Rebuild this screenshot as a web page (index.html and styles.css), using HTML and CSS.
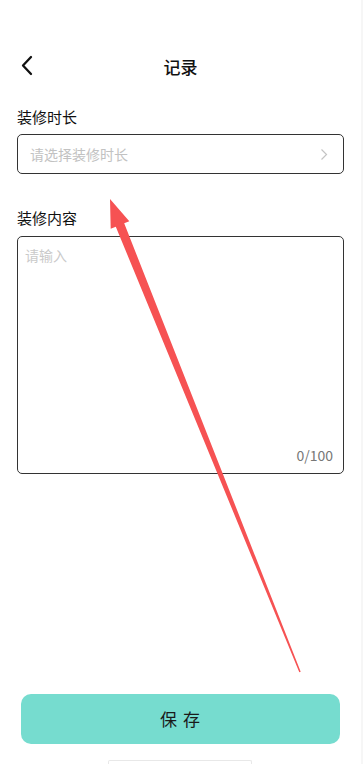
FILE: index.html
```html
<!DOCTYPE html>
<html>
	<head>
		<meta charset="UTF-8">
		<title>记录</title>
		<link rel="stylesheet" href="styles.css">
	</head>
	<body>
		<div class="page">
			<!--顶部导航-->
			<div class="nav">
				<div class="back">
					<svg width="14" height="22" viewBox="0 0 14 22">
						<path d="M10 2 L2 10.5 L10 19" fill="none" stroke="#111" stroke-width="2.3" stroke-linecap="round" stroke-linejoin="round"/>
					</svg>
				</div>
				<div class="title">记录</div>
			</div>
			<!--表单-->
			<div class="form">
				<div class="label">装修时长</div>
				<div class="select">
					<span class="placeholder">请选择装修时长</span>
					<svg width="8" height="13" viewBox="0 0 8 13">
						<path d="M1.5 1.5 L6.5 6.5 L1.5 11.5" fill="none" stroke="#c4c4c4" stroke-width="1.2"/>
					</svg>
				</div>
				<div class="label label2">装修内容</div>
				<div class="textarea">
					<div class="tip">请输入</div>
					<div class="count">0/100</div>
				</div>
			</div>
			<div class="btn">保 存</div>
			<div class="home"></div>
			<!--标注箭头-->
			<svg class="arrow" width="363" height="764" viewBox="0 0 363 764">
				<polygon points="110,199 129.3,221.3 124.2,223.3 300.7,671.7 299.3,672.3 115.8,226.7 110.7,228.7" fill="#f65253"/>
			</svg>
		</div>
	</body>
</html>
```

FILE: styles.css
```css
*{
	margin: 0;
	padding: 0;
	box-sizing: border-box;
}
body{
	background: #fff;
	font-family: "Noto Sans CJK SC", "Noto Sans", sans-serif;
	color: #111;
}
.page{
	position: relative;
	width: 363px;
	height: 764px;
	display: flex;
	flex-direction: column;
	border-right: 2px solid #f6f6f6;
	overflow: hidden;
}
.nav{
	margin-top: 44px;
	height: 44px;
	position: relative;
	display: flex;
	align-items: center;
	justify-content: center;
}
.back{
	position: absolute;
	left: 21px;
	top: 11px;
	width: 14px;
	height: 22px;
}
.back svg{
	display: block;
}
.title{
	font-size: 17px;
	font-weight: 500;
	line-height: 24px;
	padding-top: 2px;
}
.form{
	padding: 0 17px;
}
.label{
	margin-top: 19px;
	font-size: 15px;
	line-height: 20px;
	color: #111;
}
.label2{
	margin-top: 34px;
}
.select{
	margin-top: 7px;
	height: 40px;
	border: 1px solid #333;
	border-radius: 5px;
	display: flex;
	align-items: center;
	justify-content: space-between;
	padding: 0 15px 0 12px;
}
.placeholder{
	font-size: 14px;
	color: #c2c2c2;
}
.select svg{
	display: block;
}
.textarea{
	margin-top: 8px;
	height: 238px;
	border: 1px solid #333;
	border-radius: 5px;
	display: flex;
	flex-direction: column;
	justify-content: space-between;
	padding: 8px 10px 8px 7px;
}
.tip{
	font-size: 14px;
	line-height: 20px;
	color: #cacaca;
}
.count{
	text-align: right;
	font-size: 14px;
	line-height: 20px;
	color: #777;
}
.btn{
	margin: auto 0 0 21px;
	width: 319px;
	height: 50px;
	border-radius: 10px;
	background: #76dccf;
	font-size: 17px;
	line-height: 50px;
	text-align: center;
	letter-spacing: 1px;
	color: #1a1a1a;
}
.home{
	margin: 16px 0 0 108px;
	width: 144px;
	height: 4px;
	border: 1px solid #e8e8e8;
	border-bottom: none;
	border-radius: 2px 2px 0 0;
	background: #fff;
}
.arrow{
	position: absolute;
	left: 0;
	top: 0;
	pointer-events: none;
}
```
